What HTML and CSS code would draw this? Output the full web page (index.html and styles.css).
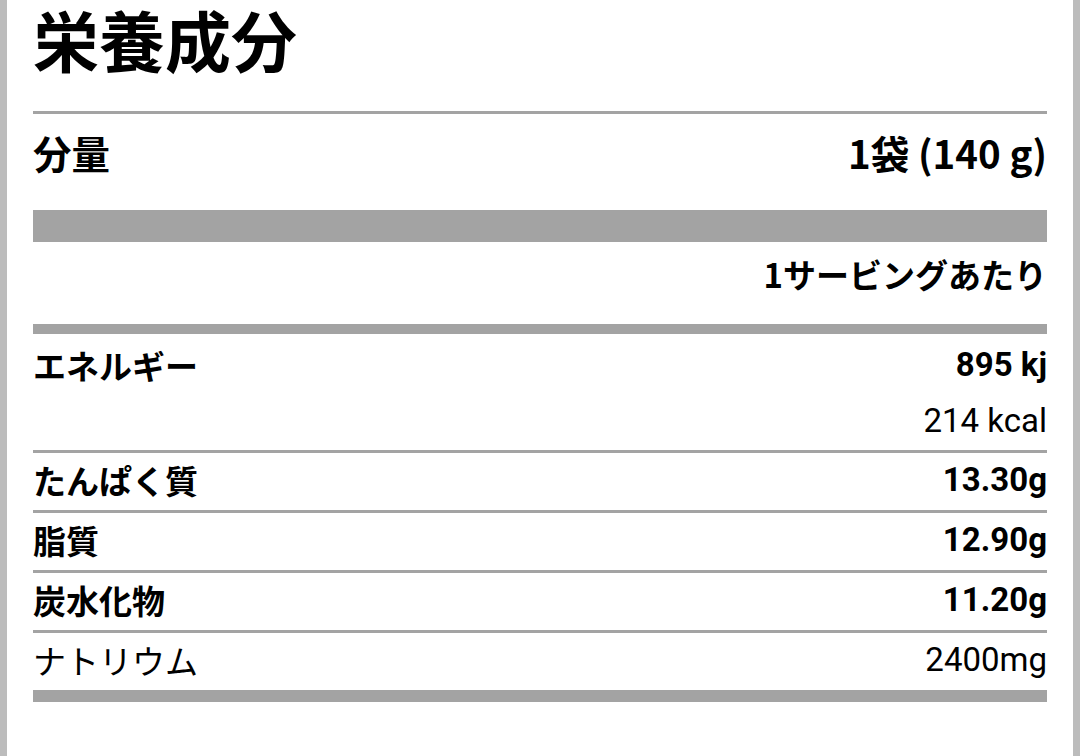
FILE: index.html
```html
<!DOCTYPE html>
<html lang="ja">
<head>
<meta charset="utf-8">
<title>栄養成分</title>
<link rel="stylesheet" href="styles.css">
</head>
<body>
<div class="frame">
  <div class="panel">
    <h1 class="title">栄養成分</h1>
    <div class="rule"></div>
    <div class="serving">
      <span class="serving-label">分量</span>
      <span class="serving-value">1袋 (140 g)</span>
    </div>
    <div class="bar bar-thick"></div>
    <div class="per">1サービングあたり</div>
    <div class="bar bar-mid"></div>
    <div class="energy">
      <div class="line">
        <span class="label">エネルギー</span>
        <span class="value">895 kj</span>
      </div>
      <div class="line">
        <span class="value light">214 kcal</span>
      </div>
    </div>
    <div class="nutrient">
      <span class="label">たんぱく質</span>
      <span class="value">13.30g</span>
    </div>
    <div class="nutrient">
      <span class="label">脂質</span>
      <span class="value">12.90g</span>
    </div>
    <div class="nutrient">
      <span class="label">炭水化物</span>
      <span class="value">11.20g</span>
    </div>
    <div class="nutrient">
      <span class="label light">ナトリウム</span>
      <span class="value light">2400mg</span>
    </div>
    <div class="bar bar-end"></div>
  </div>
</div>
</body>
</html>
```

FILE: styles.css
```css
html, body {
  margin: 0;
  padding: 0;
  background: #ffffff;
}

body {
  font-family: "Noto Sans CJK JP", "Noto Sans", sans-serif;
  color: #000000;
}

.frame {
  width: 1080px;
  height: 756px;
  box-sizing: border-box;
  border-left: 7px solid #bcbcbc;
  border-right: 7px solid #bcbcbc;
  padding: 0 26px;
  background: #ffffff;
}

.panel {
  display: flex;
  flex-direction: column;
}

.title {
  margin: 0;
  height: 111px;
  box-sizing: border-box;
  font-size: 66px;
  line-height: 76px;
  font-weight: 700;
}

.rule {
  height: 3px;
  background: #a3a3a3;
}

.serving {
  display: flex;
  justify-content: space-between;
  align-items: center;
  height: 96px;
  box-sizing: border-box;
  padding-bottom: 20px;
  font-size: 38.5px;
  line-height: 44px;
  font-weight: 700;
}

.bar {
  background: #a3a3a3;
}

.bar-thick {
  height: 32px;
}

.bar-mid {
  height: 10px;
}

.bar-end {
  height: 12px;
}

.per {
  height: 82px;
  box-sizing: border-box;
  padding-top: 14px;
  text-align: right;
  font-size: 33px;
  line-height: 36px;
  font-weight: 700;
}

.energy {
  display: flex;
  flex-direction: column;
  gap: 16px;
  height: 116px;
  box-sizing: border-box;
  padding-top: 11px;
}

.line {
  display: flex;
  justify-content: space-between;
  align-items: center;
  height: 40px;
}

.line .value:only-child {
  margin-left: auto;
}

.nutrient {
  display: flex;
  justify-content: space-between;
  align-items: center;
  height: 60px;
  box-sizing: border-box;
  border-top: 3px solid #a3a3a3;
  padding-bottom: 3px;
}

.label {
  font-size: 33px;
  line-height: 40px;
  font-weight: 700;
}

.value {
  font-family: Roboto, "Noto Sans CJK JP", sans-serif;
  font-size: 33px;
  line-height: 40px;
  font-weight: 700;
}

.light {
  font-weight: 400;
}
```
